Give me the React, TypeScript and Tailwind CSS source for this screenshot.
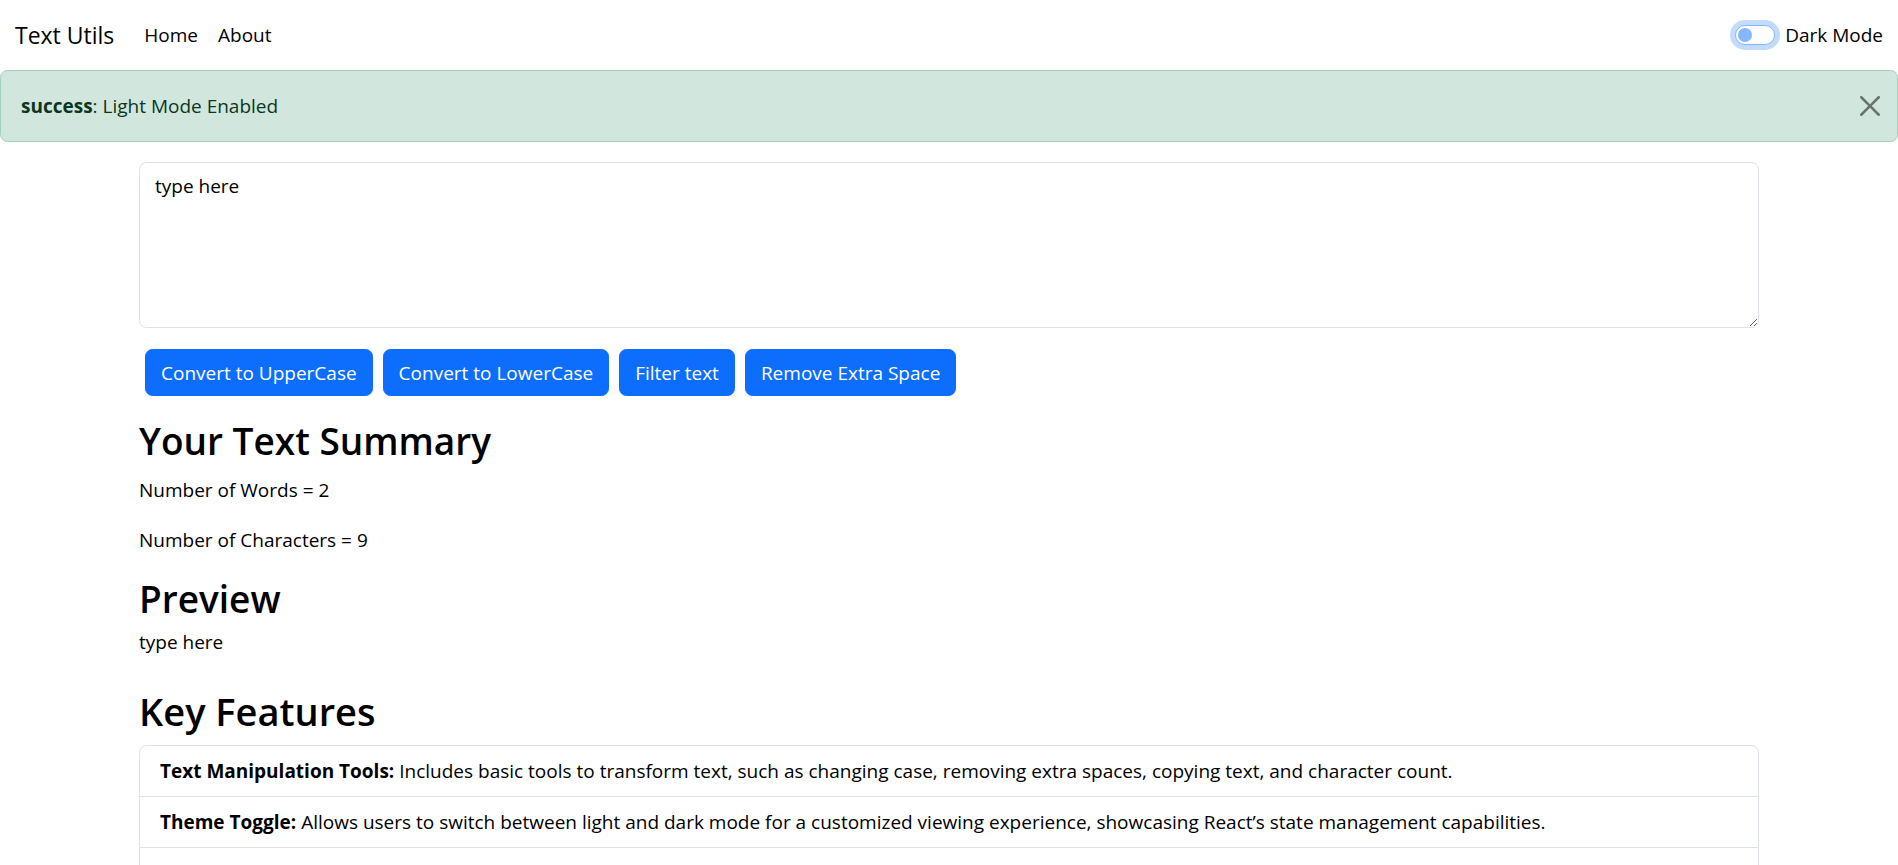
import { useState } from 'react';

const features = [
  {
    title: 'Text Manipulation Tools:',
    body: ' Includes basic tools to transform text, such as changing case, removing extra spaces, copying text, and character count.',
  },
  {
    title: 'Theme Toggle:',
    body: ' Allows users to switch between light and dark mode for a customized viewing experience, showcasing React’s state management capabilities.',
  },
  {
    title: 'Live Preview:',
    body: ' Shows a preview of the text along with a summary of words, characters and estimated reading time.',
  },
];

function DarkSwitch() {
  return (
    <label className="flex items-center">
      <span className="flex h-[20px] w-[40px] items-center rounded-full border border-[#86b7fe] bg-white ring-[5px] ring-[#0d6efd]/25">
        <span className="ml-[2px] h-[14px] w-[14px] rounded-full bg-[#86b7fe]" />
      </span>
      <span className="ml-[10px]">Dark Mode</span>
    </label>
  );
}

export default function App() {
  const [text, setText] = useState('type here');
  const words = text.split(/\s+/).filter((w) => w.length > 0).length;

  return (
    <div className="h-screen overflow-hidden bg-white font-['Open_Sans',sans-serif] text-[19px] leading-[30px] text-black">
      <nav className="flex h-[70px] items-center justify-between px-[15px]">
        <div className="flex items-center">
          <a className="mr-[20px] text-[23px] leading-[36px]">Text Utils</a>
          <ul className="flex">
            <li>
              <a className="px-[10px]">Home</a>
            </li>
            <li>
              <a className="px-[10px]">About</a>
            </li>
          </ul>
        </div>
        <DarkSwitch />
      </nav>

      <div className="flex h-[72px] items-center justify-between rounded-[7.5px] border border-[#a3cfbb] bg-[#d1e7dd] pl-[20px] pr-[17px] text-[#0a3622]">
        <div>
          <strong className="font-bold">success</strong>: Light Mode Enabled
        </div>
        <button className="flex h-[20px] w-[20px] items-center justify-center opacity-50">
          <svg viewBox="0 0 16 16" width="20" height="20" fill="#000">
            <path d="M.293.293a1 1 0 0 1 1.414 0L8 6.586 14.293.293a1 1 0 1 1 1.414 1.414L9.414 8l6.293 6.293a1 1 0 0 1-1.414 1.414L8 9.414l-6.293 6.293a1 1 0 0 1-1.414-1.414L6.586 8 .293 1.707a1 1 0 0 1 0-1.414" />
          </svg>
        </button>
      </div>

      <div className="mx-auto max-w-[1650px] px-[15px]">
        <textarea
          className="mt-[20px] block h-[166px] w-full resize-y rounded-[7.5px] border border-[#dee2e6] bg-white px-[15px] py-[7.5px] text-black outline-none"
          value={text}
          onChange={(e) => setText(e.target.value)}
        />

        <div className="mt-[21px] flex gap-[10px] pl-[6px]">
          <button className="rounded-[7.5px] border border-[#0d6efd] bg-[#0d6efd] px-[15px] py-[7.5px] text-white">
            Convert to UpperCase
          </button>
          <button className="rounded-[7.5px] border border-[#0d6efd] bg-[#0d6efd] px-[15px] py-[7.5px] text-white">
            Convert to LowerCase
          </button>
          <button className="rounded-[7.5px] border border-[#0d6efd] bg-[#0d6efd] px-[15px] py-[7.5px] text-white">
            Filter text
          </button>
          <button className="rounded-[7.5px] border border-[#0d6efd] bg-[#0d6efd] px-[15px] py-[7.5px] text-white">
            Remove Extra Space
          </button>
        </div>

        <div className="mt-[21px]">
          <h2 className="mb-[10px] text-[37px] font-semibold leading-[48px]">Your Text Summary</h2>
          <p className="mb-[20px]">Number of Words = {words}</p>
          <p className="mb-[20px]">Number of Characters = {text.length}</p>
          <h2 className="mb-[4px] text-[37px] font-semibold leading-[48px]">Preview</h2>
          <p className="mb-[20px]">{text}</p>
        </div>

        <div className="mt-[30px]">
          <h2 className="mb-[10px] text-[38px] font-semibold leading-[48px]">Key Features</h2>
          <ul className="rounded-[7.5px] border border-[#dee2e6]">
            {features.map((f, i) => (
              <li
                key={f.title}
                className={`px-[20px] py-[10px] ${i > 0 ? 'border-t border-[#dee2e6]' : ''}`}
              >
                <strong className="font-bold">{f.title}</strong>
                {f.body}
              </li>
            ))}
          </ul>
        </div>
      </div>
    </div>
  );
}
